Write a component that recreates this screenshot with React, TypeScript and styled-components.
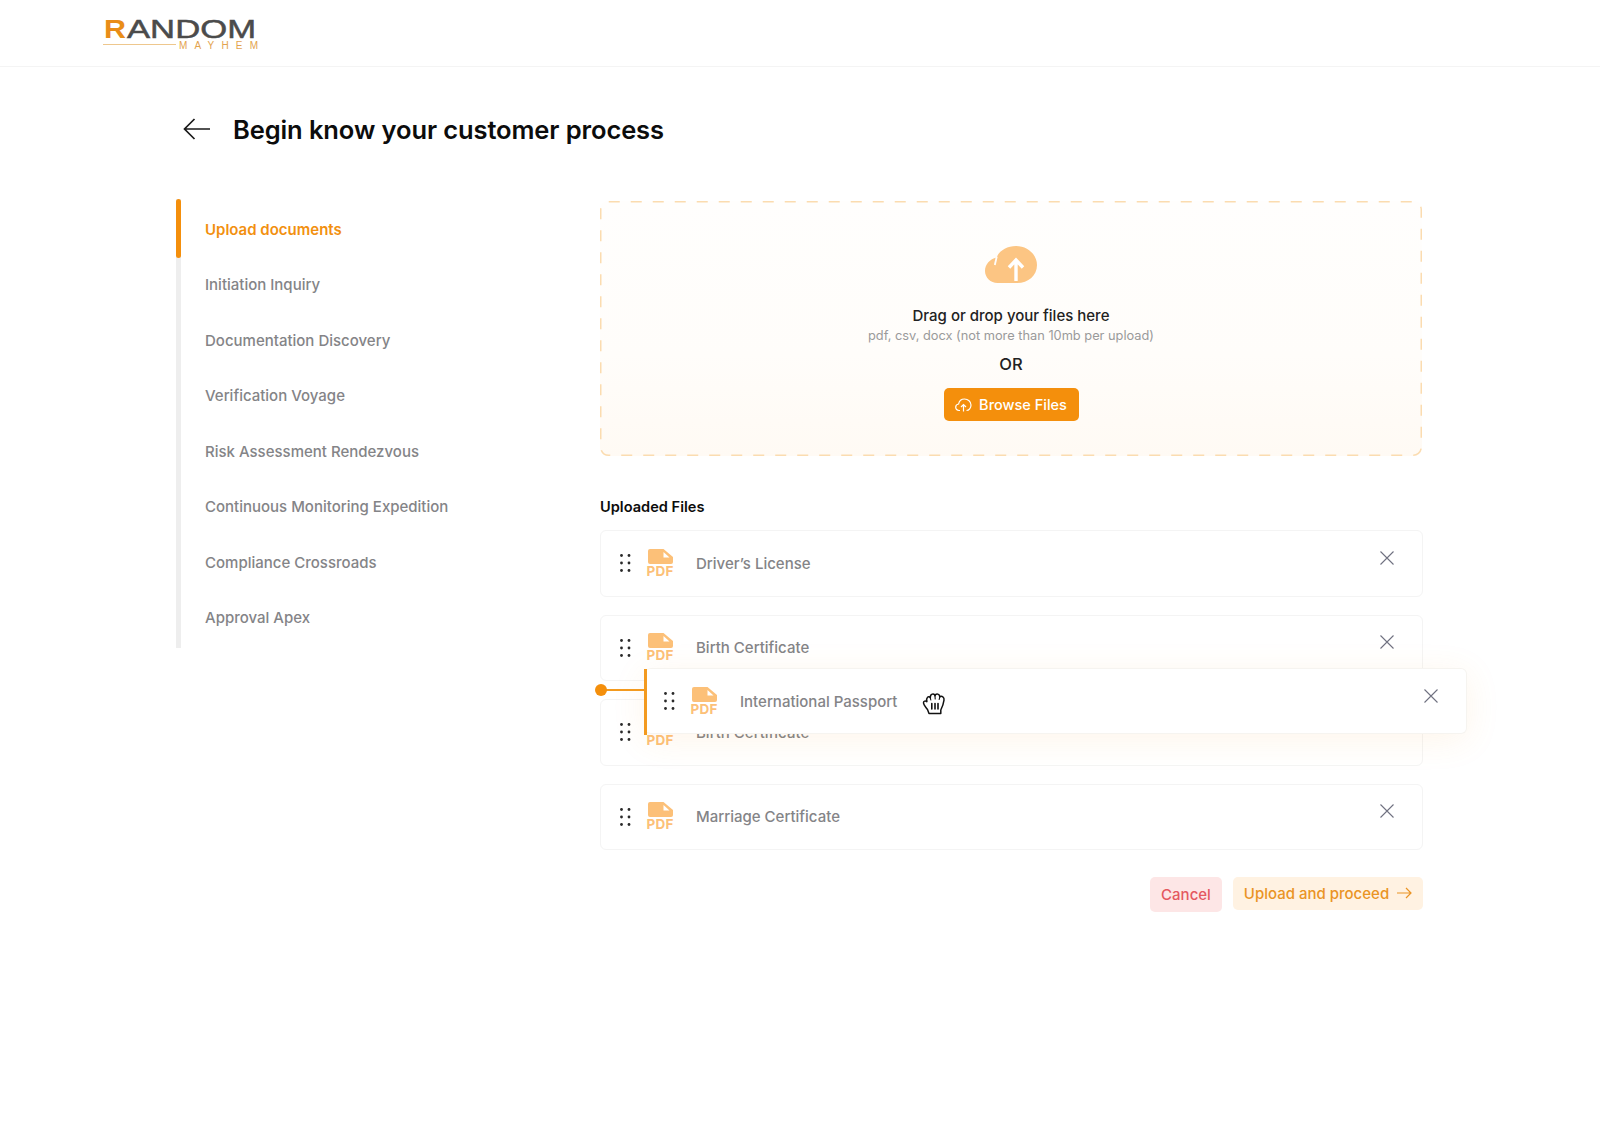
import React from "react";
import styled, { createGlobalStyle } from "styled-components";

const font = `Inter, "Liberation Sans", sans-serif`;

const Global = createGlobalStyle`
  html, body { margin: 0; padding: 0; background: #fff; }
  body { font-family: ${font}; }
  * { box-sizing: border-box; }
`;

const Page = styled.div`
  width: 1600px;
  height: 1138px;
  overflow: hidden;
  background: #fff;
`;

const Header = styled.header`
  height: 67px;
  padding: 6px 0 0 103px;
  border-bottom: 1px solid #f4f4f4;
`;

const LogoSvg = styled.svg`
  display: block;
  width: 158px;
  height: 46px;
  overflow: visible;
`;

const Main = styled.main`
  padding-left: 176px;
`;

const TitleRow = styled.div`
  display: flex;
  align-items: center;
  height: 40px;
  margin-top: 43px;
  padding-left: 7px;
  gap: 23px;
`;

const BackIcon = styled.svg`
  width: 27px;
  height: 22px;
  flex: none;
  margin-top: -2px;
`;

const Title = styled.h1`
  margin: 0;
  font-size: 25.5px;
  line-height: 40px;
  font-weight: 600;
  letter-spacing: -0.1px;
  color: #0c0c0c;
`;

const Columns = styled.div`
  display: flex;
  margin-top: 49px;
`;

const Nav = styled.nav`
  position: relative;
  flex: none;
  width: 424px;
  height: 449px;
  padding: 2.5px 0 0 24px;
  border-left: 5px solid #eeeeee;
  display: flex;
  flex-direction: column;
  align-self: flex-start;
`;

const NavMarker = styled.span`
  position: absolute;
  left: -5px;
  top: 0;
  width: 5px;
  height: 59px;
  border-radius: 3px;
  background: #f48f0c;
`;

const NavItem = styled.a<{ $active?: boolean }>`
  display: flex;
  align-items: center;
  height: 55.5px;
  font-size: 15px;
  font-weight: ${(p) => (p.$active ? 600 : 500)};
  color: ${(p) => (p.$active ? "#f2900f" : "#848487")};
`;

const Panel = styled.section`
  flex: none;
  width: 822px;
  margin-top: 2px;
`;

const DropZone = styled.div`
  position: relative;
  height: 255px;
  padding-top: 45px;
  display: flex;
  flex-direction: column;
  align-items: center;
  border-radius: 8px;
  background: linear-gradient(180deg, #fffefd 0%, #fffdfa 60%, #fffaf4 100%);
`;

const DashSvg = styled.svg`
  position: absolute;
  inset: 0;
  width: 100%;
  height: 100%;
  pointer-events: none;
`;

const CloudIcon = styled.svg`
  display: block;
  width: 52px;
  height: 37px;
  flex: none;
`;

const DropTitle = styled.div`
  margin-top: 22px;
  font-size: 15px;
  line-height: 22px;
  font-weight: 500;
  color: #222;
`;

const DropHint = styled.div`
  margin-top: 0;
  font-size: 12.8px;
  line-height: 18px;
  color: #9a9a9a;
`;

const OrLabel = styled.div`
  margin-top: 8px;
  font-size: 16.5px;
  line-height: 22px;
  font-weight: 500;
  color: #222;
`;

const BrowseButton = styled.button`
  margin-top: 13px;
  width: 135px;
  height: 33px;
  border: 0;
  border-radius: 5px;
  background: #f48f0c;
  color: #fff;
  font-family: ${font};
  font-size: 14.5px;
  font-weight: 500;
  display: flex;
  align-items: center;
  justify-content: center;
  gap: 7px;
  padding: 0;
`;

const SectionLabel = styled.h2`
  margin: 41px 0 13px;
  font-size: 14.6px;
  line-height: 20px;
  font-weight: 600;
  color: #0c0c0c;
`;

const FileList = styled.div`
  position: relative;
  width: 823px;
  display: flex;
  flex-direction: column;
  gap: 17.85px;
`;

const FileRow = styled.div`
  display: flex;
  align-items: center;
  height: 66.67px;
  padding-left: 18px;
  background: #fff;
  border: 1px solid #f4f4f4;
  border-radius: 6px;
`;

const DragRow = styled(FileRow)`
  position: absolute;
  left: 45px;
  top: 138px;
  width: 822px;
  height: 66px;
  border-color: #f6f4f0;
  border-left: 0;
  padding-left: 18px;
  box-shadow: 0 6px 34px rgba(245, 160, 50, 0.1);
`;

const DropMarkerLine = styled.span`
  position: absolute;
  left: -1px;
  top: 0;
  width: 2.5px;
  height: 66px;
  background: #f39a1f;
`;

const DropMarkerStem = styled.span`
  position: absolute;
  left: -44px;
  top: 20px;
  width: 44px;
  height: 2px;
  background: #f39a1f;
`;

const DropMarkerDot = styled.span`
  position: absolute;
  left: -50px;
  top: 15px;
  width: 12px;
  height: 12px;
  border-radius: 50%;
  background: #f48f0c;
`;

const GripIcon = styled.svg`
  width: 12px;
  height: 20px;
  flex: none;
`;

const FileBadge = styled.div`
  margin-left: 15px;
  width: 28px;
  flex: none;
  display: flex;
  flex-direction: column;
  align-items: center;
`;

const DocIcon = styled.svg`
  display: block;
  width: 25px;
  height: 15px;
`;

const PdfLabel = styled.span`
  font-family: ${font};
  font-size: 13.5px;
  line-height: 13px;
  margin-top: 1px;
  font-weight: 700;
  letter-spacing: 0.2px;
  color: #fcc078;
`;

const FileName = styled.span`
  margin-left: 22px;
  font-size: 15px;
  font-weight: 500;
  color: #848487;
`;

const HandIcon = styled.svg`
  margin-left: 25px;
  margin-top: 5px;
  width: 24px;
  height: 23px;
  flex: none;
`;

const CloseIcon = styled.svg`
  margin-left: auto;
  margin-right: 27px;
  margin-bottom: 11px;
  width: 16px;
  height: 16px;
  flex: none;
`;

const Actions = styled.div`
  display: flex;
  justify-content: flex-end;
  align-items: flex-start;
  gap: 11px;
  margin-top: 26.500px;
  width: 823px;
`;

const CancelButton = styled.button`
  width: 72px;
  height: 35px;
  border: 0;
  border-radius: 5px;
  background: #fde6e6;
  color: #e4585f;
  font-family: ${font};
  font-size: 15px;
  font-weight: 500;
  padding: 0;
`;

const ProceedButton = styled.button`
  width: 190px;
  height: 33px;
  border: 0;
  border-radius: 5px;
  background: #fff2e2;
  color: #ea9425;
  font-family: ${font};
  font-size: 15px;
  font-weight: 500;
  padding: 0;
  display: flex;
  align-items: center;
  justify-content: center;
  gap: 8px;
`;

const Logo = () => (
  <LogoSvg viewBox="0 0 158 46" aria-label="Random Mayhem">
    <text x="1" y="32" fontFamily="'Liberation Sans', sans-serif" fontWeight="700" fontSize="26.500" fill="#e98d18" textLength="22" lengthAdjust="spacingAndGlyphs">R</text>
    <text x="24" y="32" fontFamily="'Liberation Sans', sans-serif" fontWeight="400" fontSize="26.500" fill="#4b4b4b" stroke="#4b4b4b" strokeWidth="0.5" textLength="129" lengthAdjust="spacingAndGlyphs">ANDOM</text>
    <rect x="0" y="38" width="73" height="1" fill="#eec78d" />
    <text x="76" y="43" fontFamily="'Liberation Sans', sans-serif" fontSize="10" fill="#e3a34e" textLength="79" lengthAdjust="spacing">MAYHEM</text>
  </LogoSvg>
);

const Grip = () => (
  <GripIcon viewBox="0 0 12 20">
    {[2.5, 10].map((x) =>
      [2.5, 10, 17.5].map((y) => <circle key={`${x}-${y}`} cx={x} cy={y} r="1.4" fill="#2a2a2a" />)
    )}
  </GripIcon>
);

const Badge = () => (
  <FileBadge>
    <DocIcon viewBox="0 0 25 15">
      <path d="M2 0H15.500L25 8V13a2 2 0 0 1-2 2H2a2 2 0 0 1-2-2V2a2 2 0 0 1 2-2Z" fill="#fcc078" />
      <path d="M15.500 3L21.500 8.500H15.500Z" fill="#fff" />
    </DocIcon>
    <PdfLabel>PDF</PdfLabel>
  </FileBadge>
);

const Close = () => (
  <CloseIcon viewBox="0 0 16 16" fill="none" stroke="#6f7180" strokeWidth="1.1">
    <path d="M1.500 1.500L14.500 14.500M14.500 1.500L1.500 14.500" />
  </CloseIcon>
);

const steps = [
  "Initiation Inquiry",
  "Documentation Discovery",
  "Verification Voyage",
  "Risk Assessment Rendezvous",
  "Continuous Monitoring Expedition",
  "Compliance Crossroads",
  "Approval Apex",
];

const files = ["Driver’s License", "Birth Certificate", "Birth Certificate", "Marriage Certificate"];

export default function App() {
  return (
    <Page>
      <Global />
      <Header>
        <Logo />
      </Header>
      <Main>
        <TitleRow>
          <BackIcon viewBox="0 0 27 22" fill="none" stroke="#1a1a1a" strokeWidth="1.7">
            <path d="M27 11H1.500M11.500 1L1.500 11L11.500 21" />
          </BackIcon>
          <Title>Begin know your customer process</Title>
        </TitleRow>
        <Columns>
          <Nav>
            <NavMarker />
            <NavItem $active>Upload documents</NavItem>
            {steps.map((s) => (
              <NavItem key={s}>{s}</NavItem>
            ))}
          </Nav>
          <Panel>
            <DropZone>
              <DashSvg>
                <rect x="0.75" y="0.75" width="820.5" height="253.5" rx="8" fill="none" stroke="#fbdcb0" strokeWidth="1.5" strokeDasharray="11 11" />
              </DashSvg>
              <CloudIcon viewBox="0 0 52 37">
                <path d="M12.500 37C5.500 37 0 31.500 0 25C0 18.500 5 12.800 11.500 11.500C14.500 4.500 22 0 31 0C42.500 0 52 8.500 52 19C52 29.500 43.500 37 32 37Z" fill="#fcc583" />
                <path d="M11.800 10.500C11.200 13 10.500 16 9.800 19" stroke="#fffdfb" strokeWidth="1.800" fill="none" />
                <path d="M31 35V14.500M24 21.500L31 14L38 21.500" stroke="#fff" strokeWidth="3.400" fill="none" />
              </CloudIcon>
              <DropTitle>Drag or drop your files here</DropTitle>
              <DropHint>pdf, csv, docx (not more than 10mb per upload)</DropHint>
              <OrLabel>OR</OrLabel>
              <BrowseButton>
                <svg width="17" height="14" viewBox="0 0 17 14" fill="none" stroke="#fff" strokeWidth="1.2">
                  <path d="M5 12.500H4C2 12.500 .7 11 .7 9.200C.7 7.500 2 6.200 3.600 6C4.200 3 6.500 1 9.500 1C13 1 16 3.500 16 7C16 10 14 12.500 11.500 12.500" />
                  <path d="M8.500 13.500V6.500M6 9L8.500 6.500L11 9" />
                </svg>
                Browse Files
              </BrowseButton>
            </DropZone>
            <SectionLabel>Uploaded Files</SectionLabel>
            <FileList>
              {files.map((f, i) => (
                <FileRow key={`${f}-${i}`}>
                  <Grip />
                  <Badge />
                  <FileName>{f}</FileName>
                  <Close />
                </FileRow>
              ))}
              <DragRow>
                <DropMarkerLine />
                <DropMarkerStem />
                <DropMarkerDot />
                <Grip />
                <Badge />
                <FileName>International Passport</FileName>
                <HandIcon viewBox="0 0 24 23" fill="#fff" stroke="#111" strokeWidth="1.500" strokeLinejoin="round" strokeLinecap="round">
                  <path d="M7 21.500L5.500 17.500C4 15.500 1.500 13 1.500 10.800C1.500 9 3.500 8.500 4.900 9.600C3.800 5.500 6.600 3.500 8.300 5.700C8 1.500 12.200 1 13 3.800C14 1 17.800 1.800 17.800 4.900C19.800 3.500 22.500 5 22 8.200C21.500 12 20.300 15 18.800 18V21.500Z" />
                  <path d="M8.300 5.700L8.800 8M13 3.800L13.200 7M17.800 4.900L17.200 7.500" strokeWidth="1.100" />
                  <path d="M9.800 11.500V17M13 11.500V17M16 11.500V17" strokeWidth="1.600" />
                </HandIcon>
                <Close />
              </DragRow>
            </FileList>
            <Actions>
              <CancelButton>Cancel</CancelButton>
              <ProceedButton>
                Upload and proceed
                <svg width="15" height="12" viewBox="0 0 15 12" fill="none" stroke="#ea9425" strokeWidth="1.2">
                  <path d="M0 6H14M9 1L14 6L9 11" />
                </svg>
              </ProceedButton>
            </Actions>
          </Panel>
        </Columns>
      </Main>
    </Page>
  );
}
